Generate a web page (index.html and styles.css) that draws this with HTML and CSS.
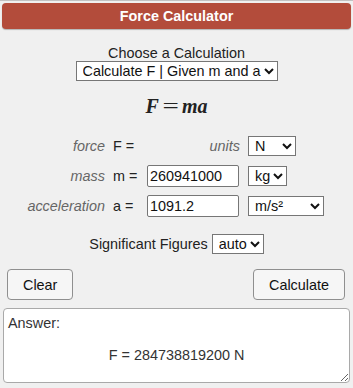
FILE: index.html
```html
<!DOCTYPE html>
<html lang="en">
<head>
  <meta charset="utf-8">
  <title>Force Calculator</title>
  <meta name="viewport" content="width=device-width, initial-scale=1">
  <link rel="stylesheet" href="styles.css">
</head>
<body>

<div class="calc">
  <!-- title bar -->
  <div class="calc-title">Force Calculator</div>

  <!-- which variable to solve for -->
  <div class="choose">
    <label for="mode">Choose a Calculation</label>
    <select id="mode" class="mode-select">
      <option>Calculate F | Given m and a</option>
      <option>Calculate m | Given F and a</option>
      <option>Calculate a | Given F and m</option>
    </select>
  </div>

  <div class="formula"><i>F</i><span class="eq">=</span><i>ma</i></div>

  <!-- inputs -->
  <div class="vars">
    <span class="var-name">force</span>
    <span class="var-sym">F =</span>
    <span class="var-name">units</span>
    <select class="unit-select unit-n">
      <option>N</option>
      <option>kN</option>
      <option>dyn</option>
    </select>

    <span class="var-name">mass</span>
    <span class="var-sym">m =</span>
    <input type="text" class="var-input" value="260941000">
    <select class="unit-select unit-kg">
      <option>kg</option>
      <option>g</option>
      <option>lb</option>
    </select>

    <span class="var-name">acceleration</span>
    <span class="var-sym">a =</span>
    <input type="text" class="var-input" value="1091.2">
    <select class="unit-select unit-ms">
      <option>m/s²</option>
      <option>ft/s²</option>
    </select>
  </div>

  <div class="sigfig">
    Significant Figures
    <select class="sig-select">
      <option>auto</option>
      <option>3</option>
      <option>4</option>
      <option>5</option>
    </select>
  </div>

  <div class="actions">
    <button type="button">Clear</button>
    <button type="button">Calculate</button>
  </div>

  <div class="answer">
    Answer:
    <div class="result">F = 284738819200 N</div>
  </div>
</div>

</body>
</html>
```

FILE: styles.css
```css
/* page */
body {
  margin: 0;
  border-top: 1px solid #c2c2c2;
  background-color: #f0f0f0;
  color: #222;
  font-family: "Liberation Sans", Arial, sans-serif;
  font-size: 14.4px;
}

.calc-title {
  margin: 2px 2px 0;
  height: 26px;
  line-height: 26px;
  border-radius: 4px;
  background-color: #b34c3b;
  box-shadow: 0 1px 1px rgba(0, 0, 0, 0.25);
  color: #fff;
  font-weight: bold;
  text-align: center;
}

select,
input,
button {
  font-family: inherit;
  font-size: 14.4px;
  color: #111;
}

select {
  height: 20px;
  border: 1px solid #767676;
  border-radius: 0;
  background-color: #fff;
  padding: 0 0 0 2px;
}

/* choose a calculation */
.choose {
  display: flex;
  flex-direction: column;
  align-items: center;
  margin-top: 16px;
  line-height: 16px;
}

.mode-select {
  width: 202px;
}

.formula {
  margin-top: 14px;
  text-align: center;
  font-family: "Liberation Serif", "Times New Roman", serif;
  font-size: 20px;
  font-weight: bold;
  line-height: 22px;
}

.formula .eq {
  display: inline-block;
  margin: 0 6px;
  font-weight: normal;
  transform: scaleX(1.45);
}

/* variable rows */
.vars {
  display: grid;
  grid-template-columns: 105px 26px 93px auto;
  grid-auto-rows: 22px;
  column-gap: 8px;
  row-gap: 8px;
  align-items: center;
  margin-top: 18px;
}

.var-name {
  text-align: right;
  font-style: italic;
  color: #666;
}

.var-input {
  box-sizing: border-box;
  width: 92px;
  height: 22px;
  border: 1px solid #767676;
  border-radius: 2px;
  padding: 1px 2px;
}

.unit-select {
  justify-self: start;
}

.unit-n { width: 48px; }
.unit-kg { width: 39px; }
.unit-ms { width: 76px; }

.sigfig {
  margin-top: 17px;
  text-align: center;
}

.sig-select {
  width: 52px;
}

/* buttons */
.actions {
  display: flex;
  justify-content: space-between;
  margin: 15px 8px 0 7px;
}

.actions button {
  height: 31px;
  padding: 0 15px;
  border: 1px solid #8f8f8f;
  border-radius: 4px;
  background-color: #f6f6f6;
  cursor: pointer;
}

/* result */
.answer {
  box-sizing: border-box;
  height: 75px;
  margin: 8px 3px 0;
  padding: 6px 4px;
  border: 1px solid #a9a9a9;
  border-radius: 4px;
  background-color: #fff;
  color: #333;
  line-height: 17px;
  overflow: auto;
  resize: both;
}

.result {
  margin-top: 15px;
  text-align: center;
}
```
